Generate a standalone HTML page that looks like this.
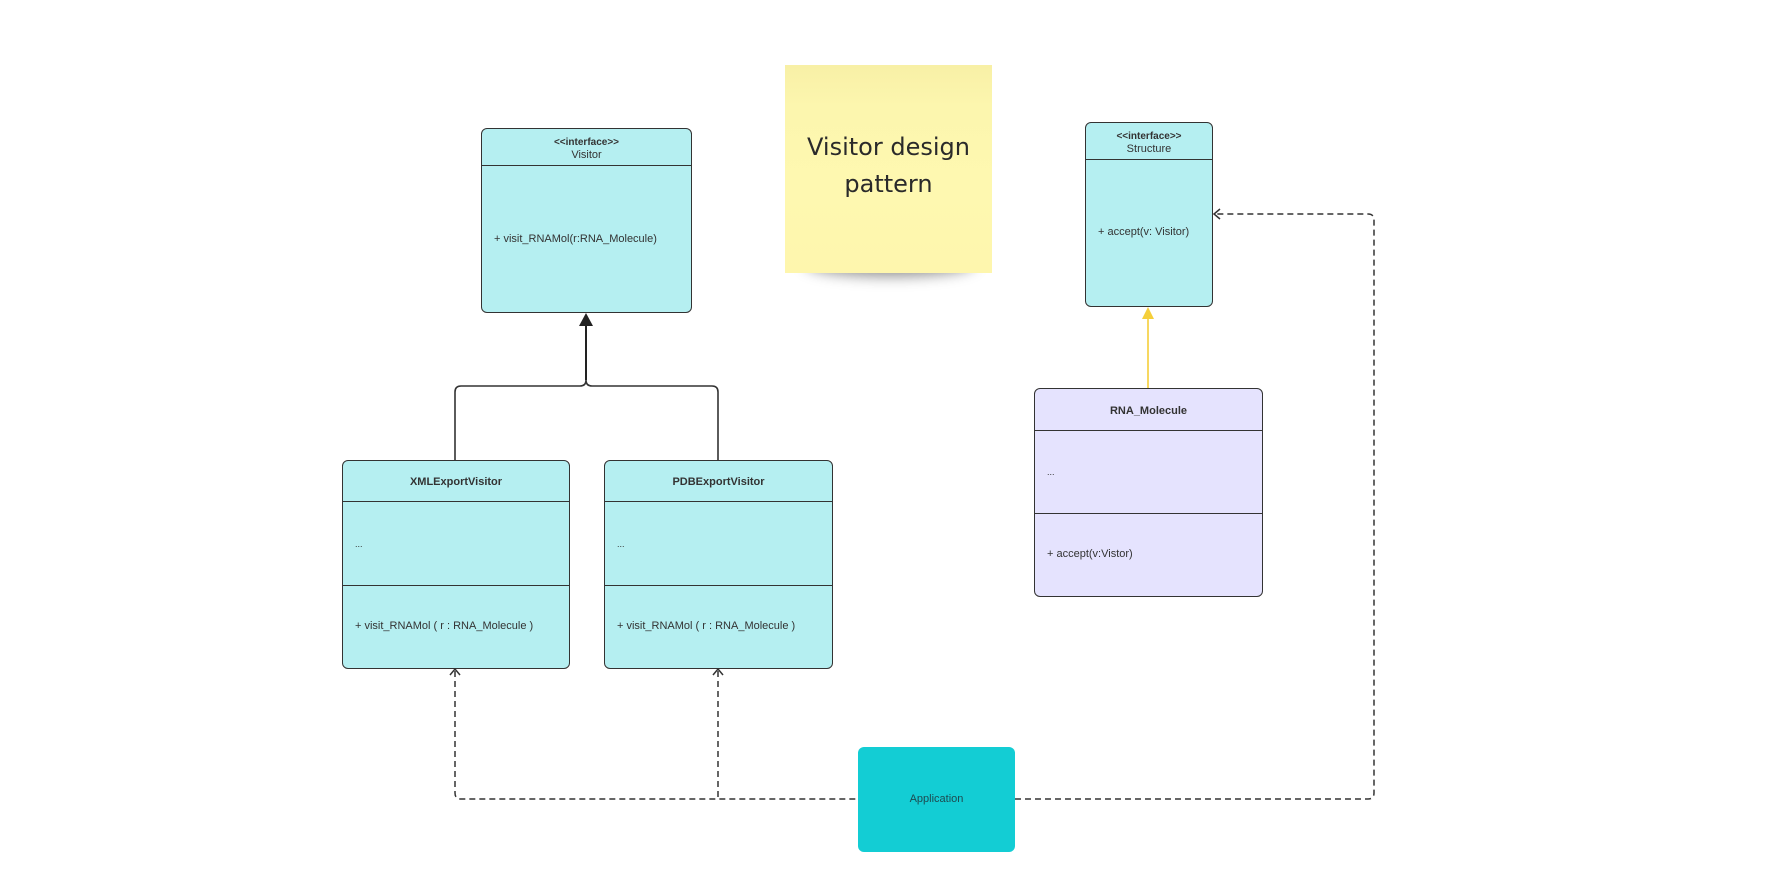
<!DOCTYPE html>
<html><head><meta charset="utf-8"><style>
html,body{margin:0;padding:0;background:#fff;}
body{width:1789px;height:873px;position:relative;overflow:hidden;font-family:"Liberation Sans",sans-serif;color:#333;}
.box{position:absolute;background:#b5eff1;border:1.5px solid #333;border-radius:6px;box-sizing:border-box;}
.t{position:absolute;font-size:11px;white-space:nowrap;}
.c{left:0;right:0;text-align:center;}
.hl{position:absolute;left:0;right:0;border-top:1.5px solid #333;}
</style></head><body>

<svg width="1789" height="873" style="position:absolute;left:0;top:0">
  <path d="M455 460 V392 q0 -6 6 -6 H580 q6 0 6 -6 q0 6 6 6 H712 q6 0 6 6 V460" fill="none" stroke="#333" stroke-width="1.6"/>
  <line x1="586" y1="380" x2="586" y2="320" stroke="#222" stroke-width="2"/>
  <polygon points="586,313 579,326 593,326" fill="#222"/>
  <line x1="1148" y1="388" x2="1148" y2="316" stroke="#f5cf3a" stroke-width="1.6"/>
  <polygon points="1148,307 1142,319 1154,319" fill="#f5cf3a"/>
  <g fill="none" stroke="#333" stroke-width="1.5" stroke-dasharray="6 4">
    <path d="M455 671 V793 q0 6 6 6 H858"/>
    <path d="M718 671 V799"/>
    <path d="M1015 799 H1368 q6 0 6 -6 V220 q0 -6 -6 -6 H1214"/>
  </g>
  <g fill="none" stroke="#333" stroke-width="1.5">
    <path d="M450 675 L455 669 L460 675"/>
    <path d="M713 675 L718 669 L723 675"/>
    <path d="M1220 209 L1214 214 L1220 219"/>
  </g>
</svg>

<!-- sticky shadow -->
<div style="position:absolute;left:805px;top:250px;width:170px;height:26px;border-radius:50%;background:rgba(0,0,0,0.45);filter:blur(7px);"></div>
<div style="position:absolute;left:785px;top:65px;width:207px;height:208px;background:linear-gradient(#f8f0a6 0%,#fcf6ae 20%,#fef8b0 60%,#fef6ad 100%);"></div>
<div style="position:absolute;left:785px;top:129px;width:207px;text-align:center;font-family:'DejaVu Sans','Liberation Sans',sans-serif;font-size:24px;line-height:37px;color:#2a2a2a;">Visitor design<br>pattern</div>

<div class="box" style="left:481px;top:128px;width:211px;height:185px;">
  <div class="t c" style="top:8px;font-weight:bold;font-size:10px;">&lt;&lt;interface&gt;&gt;</div>
  <div class="t c" style="top:20px;">Visitor</div>
  <div class="hl" style="top:36px;"></div>
  <div class="t" style="left:12px;top:104px;">+ visit_RNAMol(r:RNA_Molecule)</div>
</div>

<div class="box" style="left:1085px;top:122px;width:128px;height:185px;">
  <div class="t c" style="top:8px;font-weight:bold;font-size:10px;">&lt;&lt;interface&gt;&gt;</div>
  <div class="t c" style="top:20px;">Structure</div>
  <div class="hl" style="top:36px;"></div>
  <div class="t" style="left:12px;top:103px;">+ accept(v: Visitor)</div>
</div>

<div class="box" style="left:342px;top:460px;width:228px;height:209px;">
  <div class="t c" style="top:15px;font-weight:bold;">XMLExportVisitor</div>
  <div class="hl" style="top:40px;"></div>
  <div class="t" style="left:12px;top:78px;font-size:9px;">...</div>
  <div class="hl" style="top:124px;"></div>
  <div class="t" style="left:12px;top:159px;">+ visit_RNAMol ( r : RNA_Molecule )</div>
</div>

<div class="box" style="left:604px;top:460px;width:229px;height:209px;">
  <div class="t c" style="top:15px;font-weight:bold;">PDBExportVisitor</div>
  <div class="hl" style="top:40px;"></div>
  <div class="t" style="left:12px;top:78px;font-size:9px;">...</div>
  <div class="hl" style="top:124px;"></div>
  <div class="t" style="left:12px;top:159px;">+ visit_RNAMol ( r : RNA_Molecule )</div>
</div>

<div class="box" style="left:1034px;top:388px;width:229px;height:209px;background:#e5e3fe;">
  <div class="t c" style="top:16px;font-weight:bold;">RNA_Molecule</div>
  <div class="hl" style="top:41px;"></div>
  <div class="t" style="left:12px;top:78px;font-size:9px;">...</div>
  <div class="hl" style="top:124px;"></div>
  <div class="t" style="left:12px;top:159px;">+ accept(v:Vistor)</div>
</div>

<div style="position:absolute;left:858px;top:747px;width:157px;height:105px;background:#13cdd4;border-radius:6px;"></div>
<div class="t" style="left:858px;width:157px;top:793px;text-align:center;color:#1e4a50;">Application</div>

</body></html>
